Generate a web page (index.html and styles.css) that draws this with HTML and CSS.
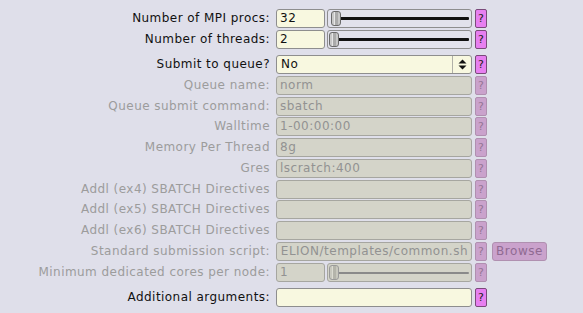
FILE: index.html
```html
<!DOCTYPE html>
<html>
<head>
<meta charset="utf-8">
<link rel="stylesheet" href="styles.css">
</head>
<body>
<div class="form">
  <div class="row">
    <div class="lbl">Number of MPI procs:</div>
    <div class="ctl"><div class="inp num">32</div><div class="slider"><div class="line"></div><div class="thumb" style="left:3px"></div></div></div>
    <div class="help">?</div>
  </div>
  <div class="row">
    <div class="lbl">Number of threads:</div>
    <div class="ctl"><div class="inp num">2</div><div class="slider"><div class="line"></div><div class="thumb" style="left:1px"></div></div></div>
    <div class="help">?</div>
  </div>
  <div class="row sep">
    <div class="lbl">Submit to queue?</div>
    <div class="ctl"><div class="inp select"><span>No</span><span class="arrows"><svg width="9" height="11" viewBox="0 0 9 11"><path d="M4.5 0.5 L8.5 4.5 L0.5 4.5 Z M4.5 10.5 L8.5 6.5 L0.5 6.5 Z" fill="#111"/></svg></span></div></div>
    <div class="help">?</div>
  </div>
  <div class="row dis">
    <div class="lbl">Queue name:</div>
    <div class="ctl"><div class="inp">norm</div></div>
    <div class="help">?</div>
  </div>
  <div class="row dis">
    <div class="lbl">Queue submit command:</div>
    <div class="ctl"><div class="inp">sbatch</div></div>
    <div class="help">?</div>
  </div>
  <div class="row dis">
    <div class="lbl">Walltime</div>
    <div class="ctl"><div class="inp">1-00:00:00</div></div>
    <div class="help">?</div>
  </div>
  <div class="row dis">
    <div class="lbl">Memory Per Thread</div>
    <div class="ctl"><div class="inp">8g</div></div>
    <div class="help">?</div>
  </div>
  <div class="row dis">
    <div class="lbl">Gres</div>
    <div class="ctl"><div class="inp">lscratch:400</div></div>
    <div class="help">?</div>
  </div>
  <div class="row dis">
    <div class="lbl">Addl (ex4) SBATCH Directives</div>
    <div class="ctl"><div class="inp"></div></div>
    <div class="help">?</div>
  </div>
  <div class="row dis">
    <div class="lbl">Addl (ex5) SBATCH Directives</div>
    <div class="ctl"><div class="inp"></div></div>
    <div class="help">?</div>
  </div>
  <div class="row dis">
    <div class="lbl">Addl (ex6) SBATCH Directives</div>
    <div class="ctl"><div class="inp"></div></div>
    <div class="help">?</div>
  </div>
  <div class="row dis">
    <div class="lbl">Standard submission script:</div>
    <div class="ctl"><div class="inp clip"><span>ELION/templates/common.sh</span></div></div>
    <div class="help">?</div>
    <div class="browse">Browse</div>
  </div>
  <div class="row dis">
    <div class="lbl">Minimum dedicated cores per node:</div>
    <div class="ctl"><div class="inp num">1</div><div class="slider"><div class="line"></div><div class="thumb" style="left:1px"></div></div></div>
    <div class="help">?</div>
  </div>
  <div class="row sep">
    <div class="lbl">Additional arguments:</div>
    <div class="ctl"><div class="inp"></div></div>
    <div class="help">?</div>
  </div>
</div>
</body>
</html>
```
FILE: styles.css
```css
html, body {
  margin: 0;
  padding: 0;
  background: #dfdfea;
  font-family: "DejaVu Sans", sans-serif;
  font-size: 12px;
  color: #111;
}
.form {
  display: flex;
  flex-direction: column;
  gap: 1.75px;
  padding-top: 9px;
}
.row {
  display: flex;
  height: 19px;
  align-items: stretch;
}
.row.sep { margin-top: 4.5px; }
.lbl {
  flex: 0 0 270px;
  text-align: right;
  line-height: 19px;
  white-space: nowrap;
  letter-spacing: 0.45px;
}
.dis .lbl { color: #9c9c9c; }
.ctl {
  margin-left: 6px;
  width: 196px;
  display: flex;
  gap: 2px;
}
.inp {
  flex: 1;
  box-sizing: border-box;
  height: 19px;
  border: 1px solid #8e8e8e;
  border-radius: 3px;
  background: #f8f8e0;
  padding-left: 3px;
  line-height: 17px;
  color: #111;
  white-space: nowrap;
  overflow: hidden;
  letter-spacing: 0.5px;
}
.dis .inp {
  background: #d4d4c9;
  color: #929292;
  border-color: #a6a6a0;
}
.inp.clip { display: flex; justify-content: flex-end; padding: 0 3px 0 0; }
.inp.num { flex: 0 0 49px; }
.slider {
  flex: 1;
  position: relative;
  box-sizing: border-box;
  height: 19px;
  border: 1px solid #8e8e8e;
  border-radius: 3px;
  background: #e2e2ec;
}
.slider .line {
  position: absolute;
  left: 3px;
  right: 2px;
  top: 7px;
  height: 3px;
  background: #111;
  border-radius: 1px;
}
.dis .slider { background: #d4d4c9; border-color: #a6a6a0; }
.dis .slider .line { background: #8a8a8a; height: 2px; top: 8px; }
.slider .thumb {
  position: absolute;
  top: 1px;
  width: 10px;
  height: 15px;
  box-sizing: border-box;
  border: 1px solid #6a6a6a;
  border-radius: 3px;
  background: linear-gradient(to right, #c8c8c8 0 2px, #e6e6e6 2px 3px, #aaa 3px 6px, #c8c8c8 6px);
}
.dis .slider .thumb { border-color: #9a9a9a; background: linear-gradient(to right, #c8c8be 0 2px, #dcdcd2 2px 3px, #b4b4aa 3px 6px, #c8c8be 6px); }
.select {
  display: flex;
  justify-content: space-between;
  padding-left: 4px;
}
.arrows {
  width: 18px;
  border-left: 1px solid #b0b0a8;
  display: flex;
  align-items: center;
  justify-content: center;
}
.help {
  margin-left: 3px;
  box-sizing: border-box;
  width: 12px;
  height: 19px;
  border: 1px solid #7a4a7a;
  border-radius: 2px;
  background: #e77ff0;
  text-align: center;
  line-height: 17px;
  font-size: 11px;
  color: #222;
}
.dis .help {
  background: #caa2cc;
  border-color: #b090b0;
  color: #957595;
}
.browse {
  margin-left: 5px;
  width: 55px;
  height: 19px;
  box-sizing: border-box;
  border: 1px solid #b090b0;
  border-radius: 3px;
  background: #caa2cc;
  color: #906a92;
  text-align: center;
  line-height: 17px;
  letter-spacing: 0.55px;
}
```
